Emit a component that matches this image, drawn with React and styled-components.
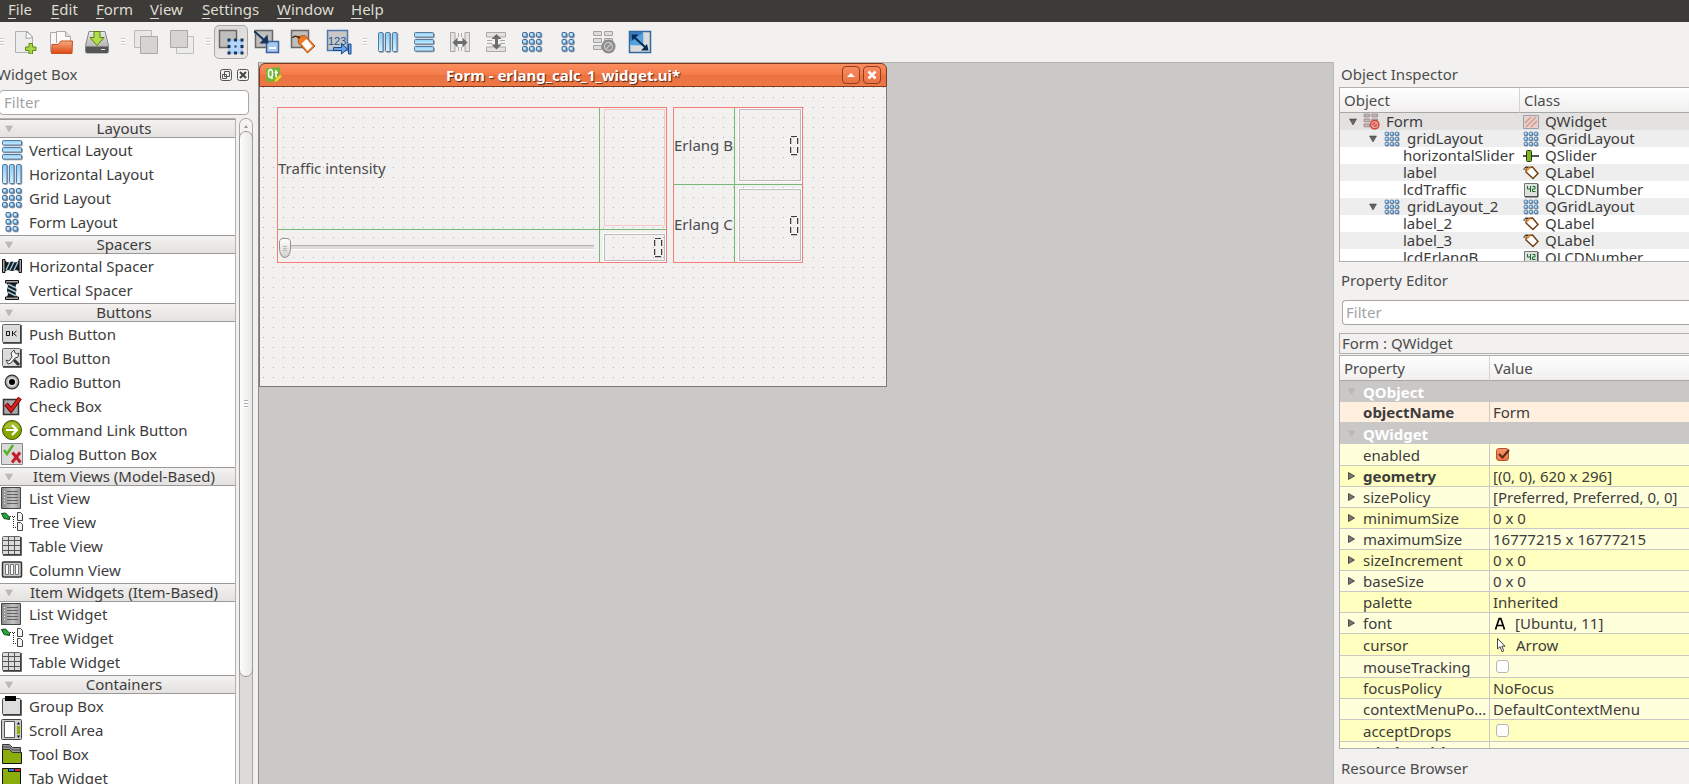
import React from 'react';
import styled, { createGlobalStyle, css } from 'styled-components';

const GlobalStyle = createGlobalStyle`
  *, *::before, *::after { box-sizing: border-box; }
  html, body, #root { height: 100%; margin: 0; }
  body {
    overflow: hidden;
    background: #f2f1f0;
    color: #3c3c3c;
    font: 15px/20px "Noto Sans", "Open Sans", sans-serif;
  }
  button, input { font: inherit; color: inherit; }
  button { border: 0; padding: 0; background: none; }
  ul { list-style: none; margin: 0; padding: 0; }
  svg { display: block; flex: none; }
`;

/* ---------- page frame ---------- */

const Page = styled.div`
  display: flex;
  flex-direction: column;
  height: 100vh;
`;

const MenuBar = styled.nav`
  display: flex;
  flex: none;
  gap: 18px;
  height: 22px;
  padding-left: 8px;
  background: #3c3b37;
`;

const MenuItem = styled.button`
  color: #dfdbd2;
  line-height: 18px;
  height: 18px;
  width: ${(p) => p.$width}px;
  text-align: left;
  white-space: nowrap;
`;

const Mnemonic = styled.u`
  text-underline-offset: 3px;
  text-decoration-thickness: 1px;
  text-decoration-skip-ink: none;
`;

const ToolBar = styled.div`
  display: flex;
  flex: none;
  align-items: center;
  height: 40px;
`;

const Grip = styled.span`
  width: ${(p) => (p.$first ? 7 : 13)}px;
  height: 8px;
  padding-left: ${(p) => (p.$first ? 0 : 6)}px;
  &::before {
    content: "";
    display: block;
    width: 4px;
    height: 8px;
    background: repeating-linear-gradient(#cdcbc9 0 1px, #fff 1px 2px, transparent 2px 3px);
  }
`;

const ToolButton = styled.button`
  display: flex;
  align-items: center;
  justify-content: center;
  width: 34px;
  height: 34px;
  margin: 0 1px;
  border: 1px solid transparent;
  border-radius: 5px;
  ${(p) => p.$active && css`
    border-color: #a9a6a3;
    background: linear-gradient(#dddbd9, #ebe9e8);
  `}
`;

const Main = styled.div`
  display: grid;
  flex: 1;
  min-height: 0;
  grid-template-columns: 258px minmax(0, 1fr) 356px;
`;

const Dock = styled.aside`
  display: flex;
  flex-direction: column;
  min-width: 0;
  min-height: 0;
`;

const DockTitle = styled.header`
  display: flex;
  flex: none;
  align-items: center;
  gap: 5px;
  height: 25px;
  color: #4c4c4c;
  & > h2 {
    flex: 1;
    margin: 0;
    padding-bottom: 2px;
    font-size: 15px;
    font-weight: 400;
  }
`;

const FilterInput = styled.input`
  flex: none;
  width: 100%;
  height: 25px;
  padding: 0 4px 2px;
  border: 1px solid #aaa7a3;
  border-radius: 4px;
  background: #fff;
  outline: 0;
  &::placeholder { color: #a3a3a3; opacity: 1; }
`;

/* ---------- widget box ---------- */

const WidgetDock = styled(Dock)`
  & > ${DockTitle} { margin: 0 9px 3px -3px; }
  & > ${FilterInput} { width: 250px; margin-left: -1px; }
`;

const WidgetBody = styled.div`
  display: flex;
  flex: 1;
  min-height: 0;
  margin-top: 3px;
`;

const WidgetList = styled.div`
  width: 236px;
  overflow: hidden;
  border: 1px solid #b5b2af;
  border-left: 0;
  border-bottom: 0;
  background: #fff;
`;

const CategoryHeader = styled.button`
  display: flex;
  align-items: center;
  width: 100%;
  height: 19px;
  margin-bottom: 1px;
  padding: 0 0 0 5px;
  border: solid #9c9a98;
  border-width: 1px 0;
  background: linear-gradient(#f3f2f1, #e4e2e0);
  & > span { flex: 1; line-height: 17px; }
`;

const WidgetItem = styled.li`
  display: flex;
  align-items: center;
  gap: 6px;
  height: 24px;
  padding: 0 0 2px 1px;
  white-space: nowrap;
`;

const ScrollTrack = styled.div`
  width: 14px;
  margin-left: 3px;
  border: 1px solid #aaa7a4;
  border-bottom: 0;
  border-radius: 7px 7px 0 0;
  background: #dddbd9;
`;

const ScrollUp = styled.button`
  display: flex;
  align-items: center;
  justify-content: center;
  width: 12px;
  height: 14px;
  border-radius: 7px 7px 0 0;
  background: #f4f3f2;
`;

const ScrollThumb = styled.div`
  display: flex;
  align-items: center;
  justify-content: center;
  height: 546px;
  width: 14px;
  margin: -2px 0 0 -1px;
  border: 1px solid #9d9a97;
  border-radius: 7px;
  background: linear-gradient(90deg, #fdfdfd, #e9e8e6);
  &::before {
    content: "";
    width: 4px;
    height: 8px;
    background: repeating-linear-gradient(#aaa 0 1px, #fff 1px 3px);
  }
`;

/* ---------- workspace and form window ---------- */

const Workspace = styled.main`
  min-width: 0;
  overflow: hidden;
  border-top: 1px solid #b4b2af;
  border-left: 1px solid #8f8d8b;
  background: #cac9c7;
`;

const FormWindow = styled.section`
  display: flex;
  flex-direction: column;
  width: 628px;
  height: 324px;
`;

const TitleBar = styled.header`
  display: flex;
  align-items: center;
  gap: 4px;
  height: 24px;
  padding: 0 5px;
  border: 1px solid #7d3a1d;
  border-radius: 6px 6px 0 0;
  background: linear-gradient(#fb8d60, #f67a47 50%, #ea7140 52%, #ee7846);
  & > h1 {
    flex: 1;
    margin: 0;
    color: #fff;
    font-size: 15px;
    font-weight: 700;
    line-height: 20px;
    text-align: center;
    text-shadow: 1px 1px 1px #4d2413;
  }
`;

const CaptionButton = styled.button`
  display: flex;
  align-items: center;
  justify-content: center;
  width: 18px;
  height: 18px;
  margin-left: -1px;
  border: 1px solid #8a4021;
  border-radius: 4px;
  background: linear-gradient(#f98b60, #ea7142);
`;

const Canvas = styled.div`
  display: flex;
  flex: 1;
  align-items: flex-start;
  gap: 6px;
  padding: 20px 0 0 17px;
  border: solid #7b7a78;
  border-width: 0 1px 1px;
  background-color: #f2f1f0;
  background-image: conic-gradient(from 90deg at 9px 9px, #b2b1af 90deg, transparent 0);
  background-size: 10px 10px;
  background-position: -6px -9px;
  color: #4c4c4c;
`;

const LayoutGrid = styled.div`
  display: grid;
  height: 156px;
  border: 1px solid #f77b78;
  grid-template: ${(p) => p.$template};
`;

const Cell = styled.div`
  display: flex;
  align-items: center;
  padding: ${(p) => p.$pad || '0 0 2px'};
  white-space: nowrap;
  border: 0 solid #78b878;
  border-right-width: ${(p) => (p.$right ? 1 : 0)}px;
  border-bottom-width: ${(p) => (p.$bottom ? 1 : 0)}px;
`;

const SpacerFrame = styled.div`
  align-self: stretch;
  width: 100%;
  border: 1px solid #f5cbc9;
`;

const Lcd = styled.output`
  display: flex;
  flex: 1;
  align-self: stretch;
  align-items: center;
  justify-content: flex-end;
  padding-right: 2px;
  border: 1px solid #fff;
  box-shadow: inset 1px 1px #bebcba, inset -1px -1px #bebcba;
`;

const Slider = styled.input`
  width: 100%;
  height: 20px;
  margin: 0;
  appearance: none;
  background: linear-gradient(#b3b1af 0 1px, #dddcda 1px 4px, #fff 4px) center 7px / calc(100% - 4px) 5px no-repeat;
  &::-webkit-slider-thumb {
    appearance: none;
    width: 12px;
    height: 20px;
    border: 1px solid #96938f;
    border-radius: 5px 5px 7px 7px / 5px 5px 11px 11px;
    background:
      repeating-linear-gradient(#b7b5b3 0 1px, transparent 1px 2px) center 7px / 4px 5px no-repeat,
      linear-gradient(#fff, #d5d3d1);
  }
`;

/* ---------- right docks ---------- */

const RightDock = styled(Dock)`
  border-left: 1px solid #bdbbb8;
  padding-left: 5px;
  & > ${DockTitle} { padding-left: 2px; }
  & > ${FilterInput} {
    width: auto;
    margin: 0 0 8px 3px;
    border-right: 0;
    border-radius: 4px 0 0 4px;
    padding-left: 3px;
  }
`;

const EditorTitle = styled(DockTitle)`
  margin: 6px 0 7px;
`;

const BottomTitle = styled(DockTitle)`
  height: 35px;
  padding-top: 5px;
`;

const TableFrame = styled.div`
  flex: ${(p) => (p.$fill ? '1 1 0' : '0 0 175px')};
  min-height: 0;
  overflow: hidden;
  border: 1px solid #b2b0ad;
  border-right: 0;
  background: #fff;
`;

const Table = styled.table`
  width: 100%;
  table-layout: fixed;
  border-collapse: separate;
  border-spacing: 0;
  white-space: nowrap;
  th, td { padding: 0; text-align: left; font-weight: 400; vertical-align: middle; }
  thead th {
    height: 25px;
    padding-left: 4px;
    border-bottom: 1px solid #aaa8a5;
    background: linear-gradient(#fff, #f0efee);
    color: #4c4c4c;
  }
  thead th + th { border-left: 1px solid #d5d3d1; }
`;

const InspectorRow = styled.tr`
  background: ${(p) => (p.$selected ? '#e3e2e1' : p.$odd ? '#eeeeee' : '#fff')};
  td { height: 17px; line-height: 17px; }
`;

const TreeCell = styled.div`
  display: flex;
  align-items: center;
  height: 17px;
  gap: ${(p) => p.$gap || 6}px;
  padding-left: ${(p) => p.$indent}px;
`;

const ObjectBar = styled.div`
  flex: none;
  height: 21px;
  margin-bottom: 1px;
  padding-left: 2px;
  border: 1px solid #b2b0ad;
  border-right: 0;
  line-height: 19px;
  color: #4c4c4c;
`;

const GroupRow = styled.tr`
  background: #c9c8c7;
  td { height: 21px; color: #fff; font-weight: 700; }
`;

const rowColours = { peach: '#ffefdf', light: '#ffffdc', dark: '#ffffbf' };

const PropertyRow = styled.tr`
  background: ${(p) => rowColours[p.$tone]};
  td { height: ${(p) => (p.$tall ? 22 : 21)}px; border-bottom: 1px solid #c9c8c7; }
  td + td { padding-left: 3px; border-left: 1px solid #c9c8c7; }
  td:first-child { font-weight: ${(p) => (p.$bold ? 700 : 400)}; }
`;

const PropertyName = styled.div`
  display: flex;
  align-items: center;
  padding-left: 8px;
  gap: 8px;
  line-height: 20px;
  & > span { flex: 1; min-width: 0; overflow: hidden; text-overflow: ellipsis; padding-right: 2px; }
`;

const PropertyValue = styled.div`
  display: flex;
  align-items: center;
  gap: 9px;
  line-height: 20px;
`;

const CheckWrap = styled.label`
  display: grid;
  justify-content: start;
  padding-left: 3px;
  & > * { grid-area: 1 / 1; }
`;

const CheckBox = styled.input`
  appearance: none;
  display: block;
  width: 13px;
  height: 13px;
  margin: 0;
  border: 1px solid ${(p) => (p.checked ? '#b8532d' : '#b9b7b4')};
  border-radius: 3px;
  background: ${(p) => (p.checked ? 'linear-gradient(#f5936c, #ee7548)' : '#fff')};
`;

/* ---------- icons ---------- */

const Icon = ({ size = 22, box = 22, children }) => (
  <svg width={size} height={size} viewBox={`0 0 ${box} ${box}`} aria-hidden="true">{children}</svg>
);

const Bars = ({ size, vertical }) => (
  <Icon size={size}>
    <linearGradient id="bar" x2="0" y2="1"><stop stopColor="#86cdf8" /><stop offset="1" stopColor="#d3f1ff" /></linearGradient>
    {[1.5, 8.5, 15.5].map((o) => {
      const x = vertical ? o : 1.5;
      const y = vertical ? 1.5 : o;
      const w = vertical ? 4.5 : 19;
      const h = vertical ? 19 : 4.5;
      return (
        <g key={o}>
          <rect x={x + 0.8} y={y + 0.8} width={w} height={h} rx="1" fill="#8b98a8" stroke="#8b98a8" />
          <rect x={x} y={y} width={w} height={h} rx="1" fill="url(#bar)" stroke="#5a7698" />
        </g>
      );
    })}
  </Icon>
);
const Cells = ({ size, cols = [1.5, 8.5, 15.5] }) => (
  <Icon size={size}>
    {cols.map((x) => [1.5, 8.5, 15.5].map((y) => (
      <g key={`${x}-${y}`}>
        <rect x={x + 0.8} y={y + 0.8} width="4.500" height="4.500" rx="1" fill="#8b98a8" stroke="#8b98a8" />
        <rect x={x} y={y} width="4.500" height="4.500" rx="1" fill="#7fbdec" stroke="#4d6c92" />
        <rect x={x + 1} y={y + 1} width="2" height="2" fill="#d8f1ff" />
      </g>
    )))}
  </Icon>
);
const VerticalIcon = () => <Bars />;
const HorizontalIcon = () => <Bars vertical />;
const GridIcon = () => <Cells />;
const FormCells = () => <Cells cols={[5, 12]} />;

const HSplit = () => (
  <Icon>
    <g fill="#e3e2e1" stroke="#aaa9a8"><path d="M1.500 1.500h4.500v19h-4.500zM16 1.500h4.500v19H16z" /></g>
    <path d="M9.500 2v18M12.500 2v18" stroke="#aaa" strokeDasharray="4 10 4" />
    <path d="M3.500 11.500l5-5v3.500h5V6.500l5 5-5 5V13h-5v3.500z" fill="#6c6c6c" />
  </Icon>
);
const VSplit = () => (
  <Icon>
    <g fill="#e3e2e1" stroke="#aaa9a8"><path d="M1.500 1.500h19V6h-19zM1.500 16h19v4.500h-19z" /></g>
    <path d="M2 9.500h5M15 9.500h5M2 12.500h5M15 12.500h5" stroke="#aaa" />
    <path d="M11.500 3l5 5H13v5.500h3.500l-5 5-5-5H10V8H6.500z" fill="#6c6c6c" />
  </Icon>
);
const BreakLayout = ({ size = 24, red }) => (
  <Icon size={size} box={24}>
    <g fill={red ? '#c9b9b9' : '#dddcdb'} stroke={red ? '#8b7575' : '#a3a2a1'}>
      <path d="M1.500 1.500h8v4h-8zM12.500 1.500h8v4h-8zM1.500 8.500h8v4h-8zM12.500 8.500h8v4h-8zM1.500 15.500h8v4h-8z" />
    </g>
    <circle cx="16.500" cy="16.500" r="7" fill={red ? '#cf4d40' : '#8b8b8b'} />
    <circle cx="16.500" cy="16.500" r="4" fill="none" stroke={red ? '#f0a59c' : '#c4c4c4'} strokeWidth="1.500" />
    <path d="M13.500 19.500l6-6" stroke={red ? '#f0a59c' : '#c4c4c4'} strokeWidth="1.500" />
  </Icon>
);
const AdjustSize = () => (
  <Icon size={24} box={24}>
    <path d="M1.500 1.500h21v21h-21z" fill="#dddcda" stroke="#33679f" strokeWidth="1.500" />
    <path d="M2 2h14v13H2z" fill="#56a0dc" />
    <path d="M2 2h14L2 12z" fill="#3c7dc0" />
    <path d="M15.500 2v13.500H2" fill="none" stroke="#a8cdea" />
    <path d="M6 7l11 10" stroke="#062c55" strokeWidth="2" />
    <path d="M3.500 4.500h7l-6 6zM20.500 20.500h-7.500l6-6.500z" fill="#062c55" />
  </Icon>
);
const NewFile = () => (
  <Icon size={24} box={24}>
    <path d="M2.500 1.500h12l5 6v15h-17z" fill="#eeeded" stroke="#b1b0af" />
    <path d="M13.500 1.500l-.500 7 7-1z" fill="#fff" stroke="#a5a4a3" />
    <path d="M16 13.500h3.500V17H23v3.500h-3.500V24H16v-3.500h-3.500V17H16z" fill="#a9d645" stroke="#5f8a13" />
  </Icon>
);
const OpenFile = () => (
  <Icon size={26} box={26}>
    <linearGradient id="folder" x2="0" y2="1"><stop stopColor="#f8ab84" /><stop offset="1" stopColor="#dc4710" /></linearGradient>
    <path d="M2.500 23V3.500h13l3 3V11" fill="#f8f7f6" stroke="#aaa" />
    <path d="M8.500 14V2.500h9l5 5V14" fill="#fbfaf9" stroke="#aaa" />
    <path d="M17.500 2.500v5h5" fill="#ddd" stroke="#aaa" />
    <path d="M3.500 24.500l.500-9h6l3-3.500h11.500l-.500 12.500z" fill="url(#folder)" stroke="#c8511f" />
  </Icon>
);
const SaveFile = () => (
  <Icon size={26} box={26}>
    <linearGradient id="disk" x2="0" y2="1"><stop stopColor="#ececec" /><stop offset="1" stopColor="#9d9d9d" /></linearGradient>
    <path d="M5 2.500h16l3.500 14v6q0 1.500-1.500 1.500H3q-1.500 0-1.500-1.500v-6z" fill="url(#disk)" stroke="#838383" />
    <path d="M2 17.500h22v5q0 1.500-1.500 1.500h-19Q2 24 2 22.500z" fill="#555" />
    <path d="M17 20.500h4" stroke="#ddd" />
    <ellipse cx="13" cy="12" rx="8" ry="4" fill="#c4c3c2" />
    <path d="M10 2.500h6v6h4l-7 8-7-8h4z" fill="#b3dc4b" stroke="#55830f" />
  </Icon>
);
const ToFront = () => (
  <Icon size={26} box={26}>
    <path d="M1.500 1.500h17v17h-17z" fill="#e8e7e6" stroke="#bbb" />
    <path d="M7.500 7.500h17v17h-17z" fill="#d5d4d3" stroke="#a9a8a7" />
  </Icon>
);
const ToBack = () => (
  <Icon size={26} box={26}>
    <path d="M7.500 7.500h17v17h-17z" fill="#ececeb" stroke="#c0bfbe" />
    <path d="M1.500 1.500h17v17h-17z" fill="#d5d4d3" stroke="#a9a8a7" />
  </Icon>
);
const Plate = () => <path d="M1.500 1.500h17v17h-17z" fill="#bfbebd" stroke="#686868" strokeWidth="1.500" />;
const EditWidgets = () => (
  <Icon size={26} box={26}>
    <Plate />
    <path d="M11 11h13v13H11z" fill="#b5d5fb" stroke="#8fb4e4" />
    <path d="M9.500 9.500h3v3h-3zM16 9.500h3v3h-3zM22.500 9.500h3v3h-3zM9.500 16h3v3h-3zM22.500 16h3v3h-3zM9.500 22.500h3v3h-3zM16 22.500h3v3h-3zM22.500 22.500h3v3h-3zM16.500 16.500h2v2h-2z" fill="#17365d" />
  </Icon>
);
const EditSignals = () => (
  <Icon size={26} box={26}>
    <Plate />
    <path d="M12.500 12.500h12v11h-12z" fill="#a9c9f1" stroke="#3a6299" strokeWidth="1.500" />
    <path d="M15 19h7" stroke="#fff" strokeWidth="2" />
    <path d="M0 2l10 9" stroke="#17365d" strokeWidth="2" />
    <path d="M14.500 14.500H5.500l8-9z" fill="#17365d" />
  </Icon>
);
const EditBuddies = () => (
  <Icon size={26} box={26}>
    <Plate />
    <path d="M8 7.500l7-1 10 10.500-7.500 7L8.500 14z" fill="#f07a28" stroke="#b8500f" />
    <path d="M11.500 14.500L16.500 10l6 7-5 5z" fill="#fff" />
    <path d="M2.500 9q2-3.500 7.500 0" fill="none" stroke="#4c2a14" strokeWidth="1.500" />
  </Icon>
);
const TabOrder = () => (
  <Icon size={26} box={26}>
    <path d="M1.500 1.500h20v20h-20z" fill="#c9c8c7" stroke="#4f78ab" strokeWidth="1.500" />
    <text x="2" y="16" fontSize="11" fontFamily="Liberation Sans, sans-serif" fill="#1d5298">123</text>
    <path d="M7.500 18.500h8v-3.500l6 5-6 5v-3.500h-8zM22.500 15h2.500v10h-2.500z" fill="#69a1e4" stroke="#174a8c" />
  </Icon>
);

const Spring = ({ vertical }) => (
  <Icon>
    <g transform={vertical ? 'rotate(90 11 11)' : undefined}>
      <path d="M4 6.500l3 1.500 4-1 4 1 3-1.500v9l-3-1-4 1-4-1-3 1z" fill="#15191c" stroke="#15191c" />
      <path d="M5 15l4-8M9 15l4-8M13 15l4-8" stroke="#9cc5da" strokeWidth="1.500" />
      <path d="M1.500 4.500h2.500v13H1.500zM18 4.500h2.500v13H18z" fill="#a9a9a9" stroke="#111" />
    </g>
  </Icon>
);
const HSpring = () => <Spring />;
const VSpring = () => <Spring vertical />;
const Tile = () => <rect x="1.500" y="1.500" width="18" height="18" rx="1" fill="#dcdcdc" stroke="#666" />;
const Shade = () => <path d="M2 20h18V2" fill="none" stroke="#333" strokeWidth="1.500" />;
const PushIcon = () => (
  <Icon><Tile /><Shade /><path d="M5.500 8.500h3v4h-3zM11.500 8v5M15.500 8l-3 2.500 3 2.500" fill="none" stroke="#111" /></Icon>
);
const ToolIcon = () => (
  <Icon><Tile /><Shade /><path d="M5 13l3 1 3-4-1-4 3-3 1 3 2 1 2-1-1 4-3 1-4 5-3 1z" fill="#f5f5f5" stroke="#444" /><path d="M13 13l5 5" stroke="#333" strokeWidth="3" /></Icon>
);
const RadioIcon = () => (
  <Icon><circle cx="11" cy="11" r="6.800" fill="#a9a9a9" stroke="#333" strokeWidth="1.200" /><circle cx="11" cy="11" r="4.800" fill="#dedede" /><circle cx="11" cy="11" r="3" fill="#000" /></Icon>
);
const CheckIcon = () => (
  <Icon><path d="M2.500 4.500h15v15h-15z" fill="#a9a9a9" stroke="#333" strokeWidth="1.500" /><path d="M5 9l5 6L19 3" fill="none" stroke="#6d0808" strokeWidth="4.500" /><path d="M5 9l5 6L19 3" fill="none" stroke="#dc2020" strokeWidth="2.500" /></Icon>
);
const LinkIcon = () => (
  <Icon><circle cx="11" cy="11" r="9.500" fill="#86a600" stroke="#40500a" /><path d="M3 9q2-6 8-6t8 6z" fill="#a3be33" /><path d="M5 11h10M11 6l5 5-5 5" fill="none" stroke="#fff" strokeWidth="2.200" /></Icon>
);
const DialogIcon = () => (
  <Icon><path d="M.500.500h21v21H.500z" fill="#dadada" stroke="#888" /><path d="M3 7l3 4 6-9" fill="none" stroke="#54b329" strokeWidth="2.500" /><path d="M11.500 9.500l8 10M19 9.500l-8 10" stroke="#c51d2a" strokeWidth="3" /></Icon>
);
const ListIcon = () => (
  <Icon>
    <linearGradient id="list"><stop stopColor="#888" /><stop offset=".6" stopColor="#c4c4c4" /><stop offset="1" stopColor="#999" /></linearGradient>
    <path d="M.500.500h19v21H.500z" fill="url(#list)" stroke="#444" />
    <path d="M6 4.500h11M6 7.500h11M6 10.500h11M6 13.500h11M6 16.500h11" stroke="#626262" />
    <path d="M3 4.500h1M3 7.500h1M3 10.500h1M3 13.500h1M3 16.500h1" stroke="#eee" />
  </Icon>
);
const TreeIcon = () => (
  <Icon>
    <path d="M.500 2.500l4-.500 4 4v2.500L3 7.500z" fill="#25a53a" stroke="#0b4718" />
    <path d="M9 5.500h6M12.500 6v11M12 16.500h4" fill="none" stroke="#222" strokeDasharray="1 1" />
    <path d="M16.500 1.500h3l2 2v6h-5zM16.500 11.500h3l2 2v6h-5z" fill="#f4f4f4" stroke="#444" />
  </Icon>
);
const TableIcon = () => (
  <Icon><Tile /><Shade /><path d="M2 5.500h17M2 10.500h17M2 15.500h17M7.500 2v17M13.500 2v17" stroke="#555" /></Icon>
);
const ColumnIcon = () => (
  <Icon><rect x="1.500" y="3" width="19" height="15" rx="1" fill="#ccc" stroke="#333" strokeWidth="1.500" /><path d="M4.500 5.500h3v10h-3zM9.500 5.500h3v10h-3zM14.500 5.500h3v10h-3z" fill="#fff" stroke="#777" /></Icon>
);
const GroupIcon = () => (
  <Icon><rect x="1.500" y="3.500" width="18" height="16" rx="1" fill="#ddd" stroke="#555" /><path d="M2 20h18V5" fill="none" stroke="#333" strokeWidth="1.500" /><path d="M4 1h11v5H4z" fill="#000" /></Icon>
);
const ScrollIcon = () => (
  <Icon><rect x=".500" y=".500" width="20" height="20" rx="1" fill="#ccc" stroke="#444" /><path d="M3.500 2.500h10v16h-10z" fill="#fff" stroke="#555" /><path d="M16 7h3v8h-3z" fill="#8fae0c" /><path d="M16 5.500l1.500-2.500L19 5.500zM16 16.500l1.500 2.500 1.500-2.500z" fill="#000" /></Icon>
);
const ToolBoxIcon = () => (
  <Icon><path d="M1.500 6.500h7l3 3h9v11h-19z" fill="#8bad0c" stroke="#111" /><path d="M1.500 1.500h7l3 3h8v5h-8l-3-3h-7z" fill="#999" stroke="#333" /><path d="M2 4h6.500l3 3h8" fill="none" stroke="#444" /></Icon>
);
const TabIcon = () => (
  <Icon><path d="M1.500 1.500h6v3h12v16h-18z" fill="#8bad0c" stroke="#111" /><path d="M7.500 1.500h6v3h-6z" fill="#2382df" stroke="#111" /><path d="M13.500 1.500h6v3h-6z" fill="#e02828" stroke="#111" /></Icon>
);

const SmallWidget = () => (
  <Icon size={16} box={16}><path d="M.500 1.500h15v13H.500z" fill="#e9d0c9" stroke="#9d9eb8" /><path d="M2 9l6-6M3 13L13 3M8 13l6-6" stroke="#cf9d91" strokeWidth="1.500" /></Icon>
);
const SmallSlider = () => (
  <Icon size={16} box={16}><path d="M0 8h16" stroke="#555" strokeWidth="2" /><rect x="3.500" y="2.500" width="5" height="11" rx="1" fill="#83b72a" stroke="#1f3c08" /></Icon>
);
const SmallLabel = () => (
  <Icon size={16} box={16}><path d="M3.500 2.500l6-.500 5.500 6.500-5 5L3 7z" fill="#fff" stroke="#6e3f17" strokeWidth="1.500" /><path d="M3.500 2.500h5l-5 4.500z" fill="#e9963f" /><path d="M1 5q0-4 4-2.500" fill="none" stroke="#222" /></Icon>
);
const SmallLcd = () => (
  <Icon size={16} box={16}><path d="M1.500 1.500h13v13h-13z" fill="#dce3dc" stroke="#777" /><path d="M15 2v13H2" fill="none" stroke="#333" /><path d="M4.500 4v3h3M7.500 4v6M9.500 4.500h2.500v2.500h-2.500v2.500h3" fill="none" stroke="#17692d" /></Icon>
);
const SmallGrid = () => <Cells size={16} />;
const ArrowDown = ({ light, size = 8 }) => (
  <svg width={size} height={size} viewBox="0 0 8 8" aria-hidden="true">
    <path d="M.500 1h7L4 7z" fill={light ? '#bcbab7' : '#666'} stroke={light ? '#adaba8' : '#333'} strokeWidth=".500" />
  </svg>
);
const ArrowRight = () => (
  <svg width="7" height="8" viewBox="0 0 7 8" aria-hidden="true"><path d="M.500.500v7l6-3.500z" fill="#777" stroke="#333" strokeWidth=".800" /></svg>
);
const Blank = styled.i`width: 7px; flex: none;`;
const QtLogo = () => (
  <Icon size={18} box={18}>
    <path d="M1 2.500L15 1v13.500L3 16 1 14z" fill="#6fb52e" />
    <ellipse cx="5.500" cy="7.500" rx="2" ry="4" fill="none" stroke="#fff" strokeWidth="1.600" />
    <path d="M6 11l1.500 2M11 4v6q0 1.500 1.500 1.500M9.500 6.500h3.500" fill="none" stroke="#fff" strokeWidth="1.500" />
    <path d="M9 16.500l1-3 5-5 2 2-5 5z" fill="#f9d62d" stroke="#c39a33" strokeWidth=".700" />
  </Icon>
);
const Digit = () => (
  <svg width="10" height="21" viewBox="0 0 10 21" role="img" aria-label="0">
    <path d="M2 20.500h7M2.500 3v6M9.500 3v6M2.500 12v6M9.500 12v6" stroke="#c3c2c1" />
    <path d="M2 1.500h6M1.500 3v6M8.500 3v6M1.500 12v6M8.500 12v6M2 19.500h6" fill="none" stroke="#3c3c3c" />
  </svg>
);
const FontIcon = () => (
  <Icon size={13} box={13}><path d="M2.500 12.500L6.200 1.500h1.600l3.700 11M4 8.500h6" fill="none" stroke="#000" strokeWidth="1.700" /></Icon>
);
const CursorIcon = () => (
  <Icon size={14} box={14}><path d="M4.500.500v10.500l2.500-2.300 2 5 1.800-.800-2-4.700h3.200z" fill="#fff" stroke="#444" /></Icon>
);
const FloatIcon = () => (
  <Icon size={12} box={12}><rect x=".500" y=".500" width="11" height="11" rx="2" fill="none" stroke="#555" /><path d="M4.500 2.500h5v5h-5zM2.500 5.500h4v4h-4z" fill="#f2f1f0" stroke="#555" /></Icon>
);
const CloseIcon = () => (
  <Icon size={12} box={12}><rect x=".500" y=".500" width="11" height="11" rx="2" fill="none" stroke="#555" /><path d="M3 3l6 6M9 3L3 9" stroke="#444" strokeWidth="2" /></Icon>
);

const DockButton = styled.button`
  width: 12px;
  height: 12px;
`;

/* ---------- data ---------- */

const menus = [['File', 25], ['Edit', 27], ['Form', 36], ['View', 34], ['Settings', 57], ['Window', 56], ['Help', 32]];

const tools = [
  [['New', NewFile], ['Open', OpenFile], ['Save', SaveFile]],
  [['Bring to Front', ToFront], ['Send to Back', ToBack]],
  [['Edit Widgets', EditWidgets], ['Edit Signals/Slots', EditSignals], ['Edit Buddies', EditBuddies], ['Edit Tab Order', TabOrder]],
  [
    ['Lay Out Horizontally', HorizontalIcon], ['Lay Out Vertically', VerticalIcon],
    ['Horizontal Splitter', HSplit], ['Vertical Splitter', VSplit],
    ['Grid', GridIcon], ['Form Layout', FormCells],
    ['Break Layout', BreakLayout], ['Adjust Size', AdjustSize],
  ],
];

const categories = [
  ['Layouts', [['Vertical Layout', VerticalIcon], ['Horizontal Layout', HorizontalIcon], ['Grid Layout', GridIcon], ['Form Layout', FormCells]]],
  ['Spacers', [['Horizontal Spacer', HSpring], ['Vertical Spacer', VSpring]]],
  ['Buttons', [['Push Button', PushIcon], ['Tool Button', ToolIcon], ['Radio Button', RadioIcon], ['Check Box', CheckIcon], ['Command Link Button', LinkIcon], ['Dialog Button Box', DialogIcon]]],
  ['Item Views (Model-Based)', [['List View', ListIcon], ['Tree View', TreeIcon], ['Table View', TableIcon], ['Column View', ColumnIcon]]],
  ['Item Widgets (Item-Based)', [['List Widget', ListIcon], ['Tree Widget', TreeIcon], ['Table Widget', TableIcon]]],
  ['Containers', [['Group Box', GroupIcon], ['Scroll Area', ScrollIcon], ['Tool Box', ToolBoxIcon], ['Tab Widget', TabIcon]]],
];

const objects = [
  { name: 'Form', cls: 'QWidget', level: 0, Icon: SmallWidget },
  { name: 'gridLayout', cls: 'QGridLayout', level: 1, Icon: SmallGrid },
  { name: 'horizontalSlider', cls: 'QSlider', level: 2, Icon: SmallSlider },
  { name: 'label', cls: 'QLabel', level: 2, Icon: SmallLabel },
  { name: 'lcdTraffic', cls: 'QLCDNumber', level: 2, Icon: SmallLcd },
  { name: 'gridLayout_2', cls: 'QGridLayout', level: 1, Icon: SmallGrid },
  { name: 'label_2', cls: 'QLabel', level: 2, Icon: SmallLabel },
  { name: 'label_3', cls: 'QLabel', level: 2, Icon: SmallLabel },
  { name: 'lcdErlangB', cls: 'QLCDNumber', level: 2, Icon: SmallLcd },
];

const properties = [
  { group: 'QObject' },
  { name: 'objectName', value: 'Form', tone: 'peach', bold: true },
  { group: 'QWidget' },
  { name: 'enabled', check: true, tone: 'light', tall: true },
  { name: 'geometry', value: '[(0, 0), 620 x 296]', tone: 'dark', bold: true, open: true },
  { name: 'sizePolicy', value: '[Preferred, Preferred, 0, 0]', tone: 'light', open: true },
  { name: 'minimumSize', value: '0 x 0', tone: 'dark', open: true },
  { name: 'maximumSize', value: '16777215 x 16777215', tone: 'light', open: true },
  { name: 'sizeIncrement', value: '0 x 0', tone: 'dark', open: true },
  { name: 'baseSize', value: '0 x 0', tone: 'light', open: true },
  { name: 'palette', value: 'Inherited', tone: 'dark' },
  { name: 'font', value: '[Ubuntu, 11]', tone: 'light', open: true, Icon: FontIcon },
  { name: 'cursor', value: 'Arrow', tone: 'dark', tall: true, Icon: CursorIcon },
  { name: 'mouseTracking', check: false, tone: 'light', tall: true },
  { name: 'focusPolicy', value: 'NoFocus', tone: 'dark' },
  { name: 'contextMenuPolicy', value: 'DefaultContextMenu', tone: 'light' },
  { name: 'acceptDrops', check: false, tone: 'dark', tall: true },
  { name: 'windowTitle', value: 'Form', tone: 'light', bold: true, open: true },
];

/* ---------- parts ---------- */

const WidgetBox = () => (
  <WidgetDock>
    <DockTitle>
      <h2>Widget Box</h2>
      <DockButton aria-label="Float"><FloatIcon /></DockButton>
      <DockButton aria-label="Close"><CloseIcon /></DockButton>
    </DockTitle>
    <FilterInput placeholder="Filter" aria-label="Filter widgets" />
    <WidgetBody>
      <WidgetList>
        {categories.map(([title, items]) => (
          <section key={title}>
            <CategoryHeader><ArrowDown light /><span>{title}</span></CategoryHeader>
            <ul>
              {items.map(([label, Glyph]) => <WidgetItem key={label}><Glyph />{label}</WidgetItem>)}
            </ul>
          </section>
        ))}
      </WidgetList>
      <ScrollTrack>
        <ScrollUp aria-label="Scroll up"><svg width="4" height="3" viewBox="0 0 4 3"><path d="M0 3l2-3 2 3z" fill="#999" /></svg></ScrollUp>
        <ScrollThumb />
      </ScrollTrack>
    </WidgetBody>
  </WidgetDock>
);

const DesignedForm = () => (
  <FormWindow>
    <TitleBar>
      <QtLogo />
      <h1>Form - erlang_calc_1_widget.ui*</h1>
      <CaptionButton aria-label="Shade"><svg width="8" height="4" viewBox="0 0 8 4"><path d="M0 4l4-4 4 4z" fill="#fff" /></svg></CaptionButton>
      <CaptionButton aria-label="Close window"><svg width="10" height="10" viewBox="0 0 10 10"><path d="M1.500 1.500l7 7M8.500 1.500l-7 7" stroke="#fff" strokeWidth="2.500" /></svg></CaptionButton>
    </TitleBar>
    <Canvas>
      <LayoutGrid $template="122px 1fr / 322px 66px">
        <Cell as="label" htmlFor="traffic" $right $bottom>Traffic intensity</Cell>
        <Cell $bottom $pad="1px 1px 3px 4px"><SpacerFrame /></Cell>
        <Cell $right $pad="3px 3px 0 1px"><Slider id="traffic" type="range" min="0" max="99" defaultValue="0" /></Cell>
        <Cell $pad="3px 0 0 3px"><Lcd><Digit /></Lcd></Cell>
      </LayoutGrid>
      <LayoutGrid $template="77px 1fr / 61px 67px">
        <Cell $right $bottom>Erlang B</Cell>
        <Cell $bottom $pad="0 0 2px 3px"><Lcd><Digit /></Lcd></Cell>
        <Cell $right $pad="1px 0 0">Erlang C</Cell>
        <Cell $pad="3px 0 0 3px"><Lcd><Digit /></Lcd></Cell>
      </LayoutGrid>
    </Canvas>
  </FormWindow>
);

const Inspector = () => (
  <TableFrame>
    <Table>
      <colgroup><col width="179" /><col /></colgroup>
      <thead><tr><th>Object</th><th>Class</th></tr></thead>
      <tbody>
        {objects.map((o, i) => (
          <InspectorRow key={o.name} $selected={i === 0} $odd={i % 2 === 1}>
            <td>
              <TreeCell $indent={[9, 29, 63][o.level]} $gap={o.level ? 7 : 6}>
                {o.level < 2 && <ArrowDown />}
                {o.level === 0 && <BreakLayout size={17} red />}
                {o.level === 1 && <SmallGrid />}
                {o.name}
              </TreeCell>
            </td>
            <td><TreeCell $indent={4}><o.Icon />{o.cls}</TreeCell></td>
          </InspectorRow>
        ))}
      </tbody>
    </Table>
  </TableFrame>
);

const PropertyTable = () => (
  <TableFrame $fill>
    <Table>
      <colgroup><col width="149" /><col /></colgroup>
      <thead><tr><th>Property</th><th>Value</th></tr></thead>
      <tbody>
        {properties.map((p) => p.group ? (
          <GroupRow key={p.group}><td colSpan="2"><PropertyName><ArrowDown light size={7} /><span>{p.group}</span></PropertyName></td></GroupRow>
        ) : (
          <PropertyRow key={p.name} $tone={p.tone} $bold={p.bold} $tall={p.tall}>
            <td><PropertyName>{p.open ? <ArrowRight /> : <Blank />}<span>{p.name}</span></PropertyName></td>
            <td>
              {p.value === undefined ? (
                <CheckWrap>
                  <CheckBox type="checkbox" checked={p.check} readOnly aria-label={p.name} />
                  {p.check && <svg width="15" height="13" viewBox="0 0 15 13" aria-hidden="true"><path d="M3 6l3.500 3.500L13 2" fill="none" stroke="#5b2a17" strokeWidth="2" /></svg>}
                </CheckWrap>
              ) : (
                <PropertyValue>{p.Icon && <p.Icon />}{p.value}</PropertyValue>
              )}
            </td>
          </PropertyRow>
        ))}
      </tbody>
    </Table>
  </TableFrame>
);

export default function App() {
  return (
    <Page>
      <GlobalStyle />
      <MenuBar>
        {menus.map(([m, w]) => <MenuItem key={m} $width={w}><Mnemonic>{m[0]}</Mnemonic>{m.slice(1)}</MenuItem>)}
      </MenuBar>
      <ToolBar role="toolbar">
        {tools.map((group, g) => (
          <React.Fragment key={g}>
            <Grip $first={g === 0} />
            {group.map(([label, Glyph]) => (
              <ToolButton key={label} aria-label={label} $active={label === 'Edit Widgets'}><Glyph /></ToolButton>
            ))}
          </React.Fragment>
        ))}
      </ToolBar>
      <Main>
        <WidgetBox />
        <Workspace><DesignedForm /></Workspace>
        <RightDock>
          <DockTitle><h2>Object Inspector</h2></DockTitle>
          <Inspector />
          <EditorTitle><h2>Property Editor</h2></EditorTitle>
          <FilterInput placeholder="Filter" aria-label="Filter properties" />
          <ObjectBar>Form : QWidget</ObjectBar>
          <PropertyTable />
          <BottomTitle><h2>Resource Browser</h2></BottomTitle>
        </RightDock>
      </Main>
    </Page>
  );
}
